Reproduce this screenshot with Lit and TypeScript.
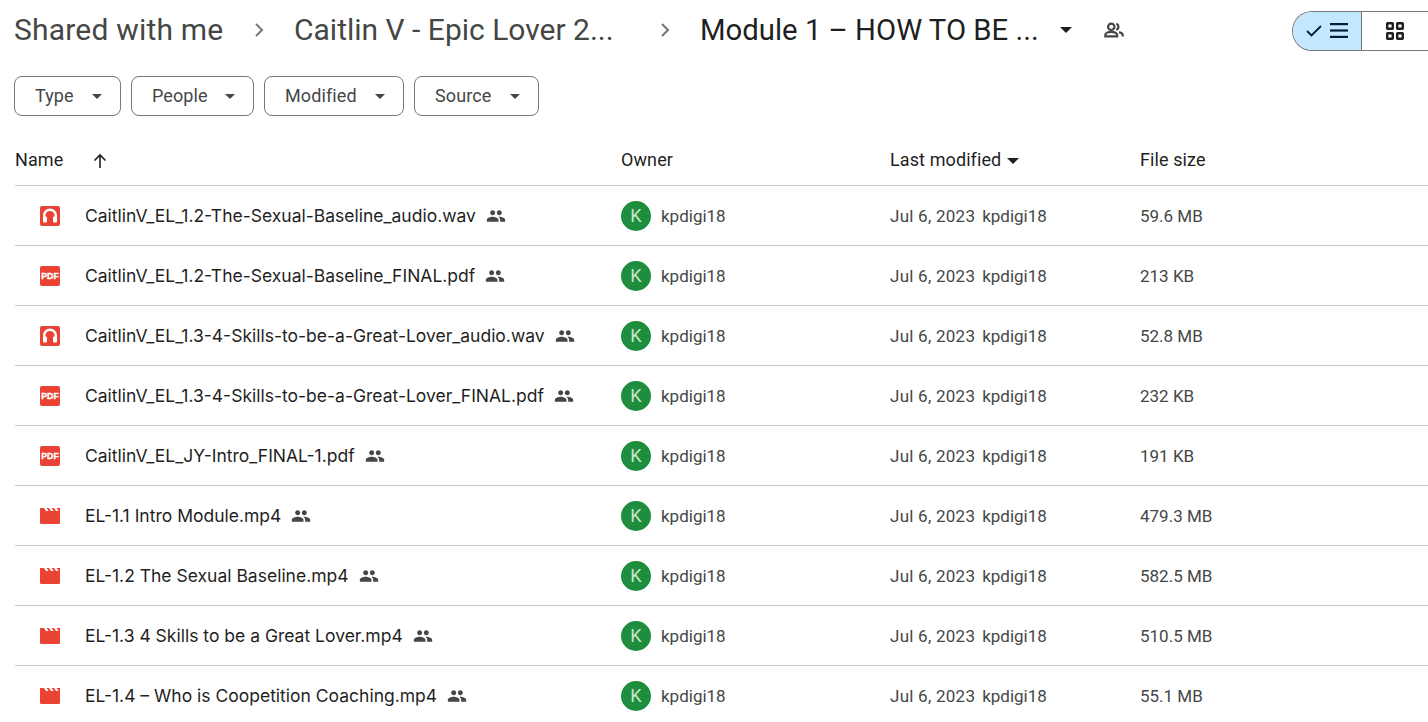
import { LitElement, html, css, svg } from "lit";
import { customElement } from "lit/decorators.js";

const files = [
  ["audio", "CaitlinV_EL_1.2-The-Sexual-Baseline_audio.wav", "59.6 MB"],
  ["pdf", "CaitlinV_EL_1.2-The-Sexual-Baseline_FINAL.pdf", "213 KB"],
  ["audio", "CaitlinV_EL_1.3-4-Skills-to-be-a-Great-Lover_audio.wav", "52.8 MB"],
  ["pdf", "CaitlinV_EL_1.3-4-Skills-to-be-a-Great-Lover_FINAL.pdf", "232 KB"],
  ["pdf", "CaitlinV_EL_JY-Intro_FINAL-1.pdf", "191 KB"],
  ["video", "EL-1.1 Intro Module.mp4", "479.3 MB"],
  ["video", "EL-1.2 The Sexual Baseline.mp4", "582.5 MB"],
  ["video", "EL-1.3 4 Skills to be a Great Lover.mp4", "510.5 MB"],
  ["video", "EL-1.4 – Who is Coopetition Coaching.mp4", "55.1 MB"],
];

const audioIcon = html`<svg width="20" height="20" viewBox="0 0 20 20"><rect width="20" height="20" rx="2" fill="#ea4335"/><path d="M4.200 15V9.500a5.800 5.800 0 0 1 11.600 0V15" fill="none" stroke="#fff" stroke-width="2.400"/><rect x="3" y="10.500" width="4" height="6" rx="1.200" fill="#fff"/><rect x="13" y="10.500" width="4" height="6" rx="1.200" fill="#fff"/></svg>`;
const pdfIcon = html`<svg width="20" height="20" viewBox="0 0 20 20"><rect width="20" height="20" rx="2" fill="#ea4335"/><text x="10" y="13.200" text-anchor="middle" font-family="'Liberation Sans',sans-serif" font-size="8.800" font-weight="700" fill="#fff" stroke="#fff" stroke-width=".3">PDF</text></svg>`;
const videoIcon = html`<svg width="20" height="20" viewBox="0 0 20 20"><path d="M0 5 L0 16.500a1.500 1.500 0 0 0 1.500 1.500h17a1.500 1.500 0 0 0 1.500-1.500V2H0z" fill="#ea4335"/><path d="M4 2l2 3h2.600l-2-3zM9 2l2 3h2.600l-2-3zM14 2l2 3h2.600l-2-3z" fill="#fff"/></svg>`;
const icons: Record<string, unknown> = { audio: audioIcon, pdf: pdfIcon, video: videoIcon };

const sharedIcon = html`<svg class="shared" width="20" height="20" viewBox="0 0 24 24" fill="#444746"><path d="M16 11c1.660 0 2.990-1.340 2.990-3S17.660 5 16 5s-3 1.340-3 3 1.340 3 3 3zm-8 0c1.660 0 2.990-1.340 2.990-3S9.660 5 8 5 5 6.340 5 8s1.340 3 3 3zm0 2c-2.330 0-7 1.170-7 3.500V19h14v-2.500C15 14.170 10.330 13 8 13zm8 0c-.29 0-.62.02-.97.05 1.160.84 1.970 1.970 1.970 3.450V19h6v-2.500c0-2.330-4.670-3.500-7-3.500z"/></svg>`;
const caret = svg`<path d="M0 0h10L5 5z"/>`;
const chevron = html`<svg width="10" height="16" viewBox="0 0 10 16"><path d="M2 2l6 6-6 6" fill="none" stroke="#747775" stroke-width="2"/></svg>`;

@customElement("app-root")
export class AppRoot extends LitElement {
  static styles = css`
    :host { display: block; width: 1428px; height: 722px; overflow: hidden; background: #fff; font-family: Roboto, "Liberation Sans", sans-serif; color: #1f1f1f; }
    .crumbs { height: 60px; display: flex; align-items: center; padding-left: 14px; font-size: 30px; color: #444746; white-space: nowrap; }
    .crumb1 { width: 210px; letter-spacing: 0.2px; padding-bottom: 2px; }
    .sep { width: 70px; display: flex; justify-content: center; }
    .sep.narrow { width: 30px; }
    .crumb2 { width: 356px; padding-bottom: 2px; }
    .crumb3 { width: 340px; margin-left: 20px; color: #1f1f1f; font-size: 29.300px; }
    .dd { fill: #1f1f1f; margin-left: 20px; display: block; }
    .people { margin-left: 31px; display: block; }
    .toggle-wrap { margin-left: auto; display: flex; width: 136px; height: 40px; box-sizing: border-box; border: 1px solid #747775; border-right: none; border-radius: 20px 0 0 20px; overflow: hidden; margin-top: 1px; }
    .t-list { width: 68px; background: #c2e7ff; border-right: 1px solid #747775; display: flex; align-items: center; justify-content: center; gap: 8px; }
    .t-grid { flex: 1; display: flex; align-items: center; justify-content: center; }
    .t-list svg, .t-grid svg { display: block; }
    .filters { display: flex; gap: 10px; padding: 16px 0 0 14px; height: 40px; }
    .chip { box-sizing: border-box; height: 40px; border: 1px solid #747775; border-radius: 8px; display: flex; align-items: center; justify-content: space-between; font-size: 18px; letter-spacing: 0.1px; color: #444746; padding: 0 18px 0 20px; }
    .chip span { padding-bottom: 2px; }
    .chip svg { fill: #444746; display: block; }
    .grid { display: grid; grid-template-columns: 606px 269px 250px 1fr; margin-left: 15px; align-items: center; }
    .head { height: 49px; font-size: 18px; letter-spacing: 0.1px; color: #1f1f1f; border-bottom: 1px solid #c7c7c7; }
    .head span { display: block; padding-bottom: 2px; }
    .headwrap { padding-top: 20px; }
    .hname { display: flex; align-items: center; }
    .hname svg { margin-left: 29px; display: block; }
    .hmod { display: flex; align-items: center; gap: 6px; }
    .hmod svg { fill: #1f1f1f; display: block; }
    .row { height: 59px; border-bottom: 1px solid #c7c7c7; font-size: 17px; color: #444746; }
    .name { display: flex; align-items: center; padding-left: 25px; color: #1f1f1f; white-space: nowrap; font-family: Inter, Roboto, sans-serif; font-size: 17.500px; }
    .ficon { display: block; width: 20px; height: 20px; margin-right: 25px; flex: none; }
    .ficon svg { display: block; }
    .shared { margin-left: 10px; display: block; flex: none; }
    .owner { display: flex; align-items: center; gap: 10px; }
    .avatar { width: 30px; height: 30px; border-radius: 50%; background: #1e8e3e; color: #c8e6c9; display: flex; align-items: center; justify-content: center; font-size: 18px; }
    .mod { display: flex; gap: 7px; }
    .date { letter-spacing: 0.25px; }
  `;

  render() {
    const filters: [string, number][] = [["Type", 107], ["People", 123], ["Modified", 140], ["Source", 125]];
    return html`
      <div class="crumbs">
        <span class="crumb1">Shared with me</span>
        <span class="sep">${chevron}</span>
        <span class="crumb2">Caitlin V - Epic Lover 2...</span>
        <span class="sep narrow">${chevron}</span>
        <span class="crumb3">Module 1 – HOW TO BE ...</span>
        <svg class="dd" width="12" height="6" viewBox="0 0 10 5">${caret}</svg>
        <svg class="people" width="22" height="22" viewBox="0 0 24 24" fill="none" stroke="#444746" stroke-width="2.400"><circle cx="9" cy="8.500" r="3.500"/><path d="M2.500 19v-1.500c0-2 3-3.500 6.500-3.500s6.500 1.500 6.500 3.500V19z"/><path d="M14.500 5.200a3.500 3.500 0 0 1 0 6.600M17.500 14.300c2.300.6 4 1.700 4 3.200V19"/></svg>
        <div class="toggle-wrap">
          <div class="t-list">
            <svg width="16" height="13" viewBox="0 0 16 13"><path d="M1 7l4.500 4.500L15 2" fill="none" stroke="#001d35" stroke-width="1.800"/></svg>
            <svg width="18" height="15" viewBox="0 0 18 15" fill="#001d35"><rect y="0" width="18" height="2.200"/><rect y="6.400" width="18" height="2.200"/><rect y="12.800" width="18" height="2.200"/></svg>
          </div>
          <div class="t-grid"><svg width="18" height="18" viewBox="0 0 18 18" fill="none" stroke="#1f1f1f" stroke-width="2.400"><rect x="1.200" y="1.200" width="5.600" height="5.600" rx=".5"/><rect x="11.200" y="1.200" width="5.600" height="5.600" rx=".5"/><rect x="1.200" y="11.200" width="5.600" height="5.600" rx=".5"/><rect x="11.200" y="11.200" width="5.600" height="5.600" rx=".5"/></svg></div>
        </div>
      </div>
      <div class="filters">
        ${filters.map(([f, w]) => html`<div class="chip" style="width:${w}px"><span>${f}</span><svg width="10" height="5" viewBox="0 0 10 5">${caret}</svg></div>`)}
      </div>
      <div class="headwrap">
        <div class="grid head">
          <div class="hname"><span>Name</span><svg width="16" height="16" viewBox="0 0 16 16"><path d="M8 15V2M2.500 7.500L8 2l5.500 5.500" fill="none" stroke="#1f1f1f" stroke-width="1.600"/></svg></div>
          <div><span>Owner</span></div>
          <div class="hmod"><span>Last modified</span><svg width="12" height="6" viewBox="0 0 10 5">${caret}</svg></div>
          <div><span>File size</span></div>
        </div>
      </div>
      ${files.map(([t, n, s]) => html`
        <div class="grid row">
          <div class="name"><span class="ficon">${icons[t]}</span><span>${n}</span>${sharedIcon}</div>
          <div class="owner"><span class="avatar">K</span><span>kpdigi18</span></div>
          <div class="mod"><span class="date">Jul 6, 2023</span><span>kpdigi18</span></div>
          <div>${s}</div>
        </div>`)}
    `;
  }
}
